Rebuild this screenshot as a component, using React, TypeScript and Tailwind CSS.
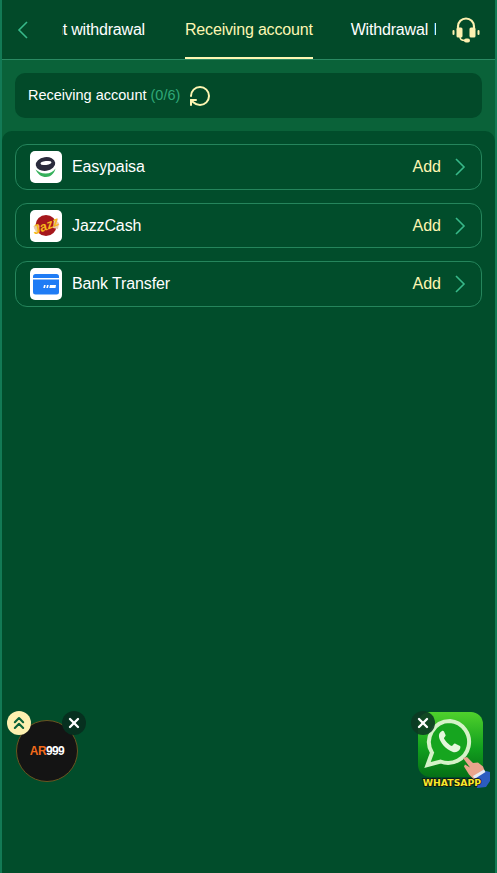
import { ChevronsUp, RotateCw, X } from "lucide-react";

function Chevron({ left }: { left?: boolean }) {
  return (
    <svg viewBox="0 0 11 18" className="w-[11px] h-[18px] shrink-0">
      <path
        d={left ? "M10 1 2 9l8 8" : "M1 1l8 8-8 8"}
        fill="none"
        stroke="#38b98a"
        strokeWidth="1.6"
      />
    </svg>
  );
}

function EasypaisaLogo() {
  return (
    <svg viewBox="0 0 32 32" className="w-[32px] h-[32px]">
      <rect width="32" height="32" rx="5" fill="#fff" />
      <ellipse cx="15.500" cy="13" rx="9.800" ry="6.800" fill="#2a2b3c" transform="rotate(-8 15.500 13)" />
      <ellipse cx="16" cy="12" rx="5.500" ry="1.900" fill="#fff" transform="rotate(-8 16 12)" />
      <path d="M5.500 18.500c2.500 5 6 7.500 10.500 7.500s8-3 9.500-8.500c-2.500 3.500-5.500 5-9.500 5-4 .2-7.500-1.500-10.500-4z" fill="#35b05a" />
    </svg>
  );
}

function JazzLogo() {
  return (
    <svg viewBox="0 0 32 32" className="w-[32px] h-[32px]">
      <rect width="32" height="32" rx="5" fill="#fff" />
      <circle cx="16" cy="15.500" r="10.500" fill="#a5171c" />
      <path d="M3.500 16c2-.5 4-1 6-.5l-1 8C6 22 4 19.500 3.500 16zM24 9l5 4-1 6-5-1z" fill="#e8c9a8" />
      <text
        x="16"
        y="20"
        textAnchor="middle"
        transform="rotate(-22 16 16)"
        className="font-['Liberation_Sans',sans-serif] italic font-bold text-[13px]"
        fill="#f6b71c"
      >
        Jazz
      </text>
    </svg>
  );
}

function BankLogo() {
  return (
    <svg viewBox="0 0 32 32" className="w-[32px] h-[32px]">
      <rect width="32" height="32" rx="5" fill="#fff" />
      <path d="M3 8.500a2.500 2.500 0 0 1 2.500-2.500h21A2.500 2.500 0 0 1 29 8.500V10H3z" fill="#1f7cf5" />
      <path d="M3 11.500h26V24a2.500 2.500 0 0 1-2.500 2.500h-21A2.500 2.500 0 0 1 3 24z" fill="#1f7cf5" />
      <path d="M14 17h1.700l-.7 3h-1.700zM17 17h1.700l-.7 3h-1.700zM20 17h6l-.5 3h-6.200z" fill="#fff" />
    </svg>
  );
}

function HeadsetIcon() {
  return (
    <svg viewBox="0 0 30 26" className="w-[30px] h-[26px]">
      <path d="M7 13V9.500a8 8 0 0 1 16 0V13" fill="none" stroke="#fdf0b0" strokeWidth="2.200" />
      <rect x="5.500" y="10.500" width="6" height="10" rx="1.500" fill="#fdf0b0" />
      <rect x="18.500" y="10.500" width="6" height="10" rx="1.500" fill="#fdf0b0" />
      <rect x="1.500" y="13" width="2" height="5" rx="1" fill="#fdf0b0" />
      <rect x="26.500" y="13" width="2" height="5" rx="1" fill="#fdf0b0" />
      <path d="M9 20c0 3 2 3.500 5 3.500" fill="none" stroke="#fdf0b0" strokeWidth="1.500" />
      <rect x="13" y="21.500" width="6" height="4" rx="2" fill="#fdf0b0" />
    </svg>
  );
}

function WhatsappBadge() {
  return (
    <svg viewBox="0 0 76 82" className="w-[76px] h-[82px]">
      <defs>
        <linearGradient id="wa" x1="0" y1="0" x2="0" y2="1">
          <stop offset="0" stopColor="#4fd12c" />
          <stop offset="0.55" stopColor="#12a01e" />
          <stop offset="1" stopColor="#056f16" />
        </linearGradient>
      </defs>
      <rect x="2" y="2" width="65" height="65" rx="12" fill="url(#wa)" />
      <path
        d="M34 11a21 21 0 0 0-18 31.800L11.500 55l13-3.500A21 21 0 1 0 34 11z"
        fill="#16a51f"
        stroke="#d5f2c8"
        strokeWidth="4"
      />
      <path
        d="M26 21c-2 1-3.500 3-3 6 .8 5 6.500 12.500 14 15 3 .8 6-1 7-3 .5-1.500.5-2.500 0-3l-5-2.500c-1-.3-2 1.800-3 2.500-.8.300-5.500-3-8-7.500-.3-1 1.700-2 1.700-3.200L28 21.500c-.5-.7-1.300-.8-2-.5z"
        fill="#e4f7dc"
      />
      <path d="M47 48l4-1 6 6 5-.5 5 4 3 8-11 6-6-6-5-8 1-2 5 3z" fill="#eaa48c" />
      <path d="M58 68l12-7 4 1v9l-4 6-9 1z" fill="#2b5cc0" />
      <path d="M57 66l11-6.500 1.500 2.500-11 7z" fill="#e6ecf5" />
      <text
        x="36"
        y="76"
        textAnchor="middle"
        stroke="#111"
        strokeWidth="1.600"
        paintOrder="stroke"
        fill="#f7e92a"
        className="font-['DejaVu_Sans',sans-serif] font-bold text-[9.300px]"
      >
        WHATSAPP
      </text>
    </svg>
  );
}

const accounts = [
  { name: "Easypaisa", logo: <EasypaisaLogo />, height: "h-[46px]" },
  { name: "JazzCash", logo: <JazzLogo />, height: "h-[45px]" },
  { name: "Bank Transfer", logo: <BankLogo />, height: "h-[46px]" },
];

export default function App() {
  return (
    <div className="relative h-[873px] w-[497px] overflow-hidden bg-[#0a6239] border-x-2 border-[#137a55] font-['Liberation_Sans',Arial,sans-serif]">
      <div className="flex h-[60px] items-center border-b border-[#2a8a62] bg-[#024a29]">
        <div className="flex w-[60px] shrink-0 pl-[15px]">
          <Chevron left />
        </div>
        <div className="flex h-full w-[374px] overflow-hidden text-[16px] tracking-[-0.18px]">
          <div className="flex h-full w-[83px] shrink-0 items-center justify-end overflow-hidden whitespace-nowrap text-white">
            Instant withdrawal
          </div>
          <div className="ml-[40px] flex h-full shrink-0 items-center whitespace-nowrap border-b-2 border-[#fdf6b2] pt-[2px] text-[#fdf6b2]">
            Receiving account
          </div>
          <div className="ml-[38px] flex h-full shrink-0 items-center whitespace-nowrap text-white [word-spacing:1.500px]">
            Withdrawal history
          </div>
        </div>
        <div className="ml-[15px]">
          <HeadsetIcon />
        </div>
      </div>

      <div className="mx-[13px] mt-[13px] flex h-[45px] items-center gap-[8px] rounded-[10px] bg-[#024a29] pl-[13px]">
        <span className="text-[14.500px] text-white">
          Receiving account <span className="text-[#2fa878]">(0/6)</span>
        </span>
        <RotateCw size={24} strokeWidth={2} className="rotate-180 text-[#fdf6b2]" />
      </div>

      <div className="mt-[13px] h-[742px] rounded-t-[10px] bg-[#014d2b] px-[13px] pt-[13px]">
        <div className="flex flex-col gap-[13px]">
          {accounts.map((a) => (
            <div
              key={a.name}
              className={`flex ${a.height} items-center rounded-[12px] border border-[#25855c] pl-[14px] pr-[15px]`}
            >
              {a.logo}
              <span className="ml-[10px] text-[16px] tracking-[-0.12px] text-white">{a.name}</span>
              <span className="ml-auto text-[16px] text-[#fdf6b2]">Add</span>
              <div className="ml-[14px]">
                <Chevron />
              </div>
            </div>
          ))}
        </div>
      </div>

      <div className="absolute left-[14px] top-[720px] flex h-[62px] w-[62px] items-center justify-center rounded-full border border-[#6a5520] bg-[#141414]">
        <span className="text-[12px] font-bold tracking-[-0.6px]">
          <span className="text-[#f26a1b]">AR</span>
          <span className="text-white">999</span>
        </span>
      </div>
      <div className="absolute left-[5px] top-[711px] flex h-[24px] w-[24px] items-center justify-center rounded-full bg-[#fdf0b0]">
        <ChevronsUp size={20} strokeWidth={2.5} className="text-[#0a6239]" />
      </div>
      <div className="absolute left-[60px] top-[711px] flex h-[24px] w-[24px] items-center justify-center rounded-full bg-[#06301f]">
        <X size={16} strokeWidth={3.5} className="text-white" />
      </div>

      <div className="absolute left-[414px] top-[710px]">
        <WhatsappBadge />
      </div>
      <div className="absolute left-[409px] top-[711px] flex h-[24px] w-[24px] items-center justify-center rounded-full bg-[#0c3a22]/90">
        <X size={16} strokeWidth={3.5} className="text-white" />
      </div>
    </div>
  );
}
